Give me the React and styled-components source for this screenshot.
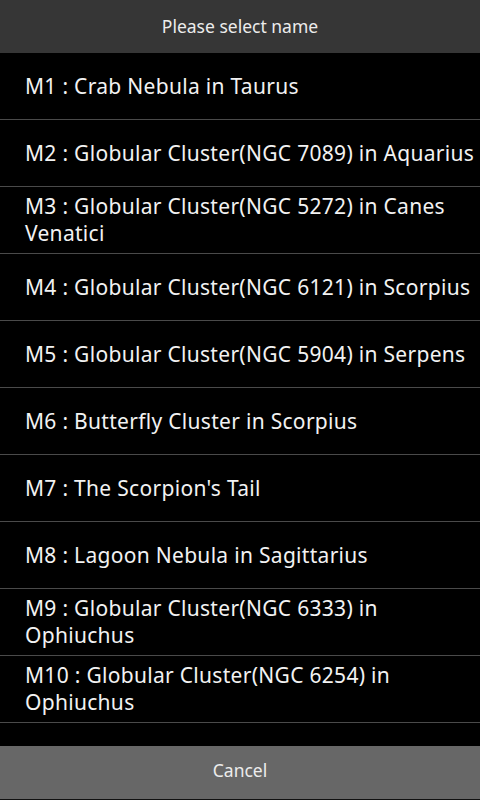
import React from "react";
import styled, { createGlobalStyle } from "styled-components";

const Global = createGlobalStyle`
  html, body { margin: 0; padding: 0; background: #000; }
  body { font-family: "Noto Sans", "Open Sans", "DejaVu Sans", sans-serif; }
  * { box-sizing: border-box; }
`;

const Screen = styled.div`
  width: 480px;
  height: 800px;
  display: flex;
  flex-direction: column;
  background: #000;
  overflow: hidden;
`;

const Header = styled.div`
  height: 53px;
  flex: none;
  background: #363636;
  color: #ececec;
  font-size: 17.5px;
  display: flex;
  align-items: center;
  justify-content: center;
  padding-bottom: 1px;
`;

const List = styled.div`
  flex: 1;
  overflow: hidden;
  display: flex;
  flex-direction: column;
`;

const Row = styled.div`
  flex: none;
  height: 67px;
  display: flex;
  align-items: center;
  padding: 0 0 0 25px;
  border-bottom: 1px solid #4a4a4a;
  color: #f2f2f2;
  font-size: 21px;
  line-height: 27px;
  letter-spacing: 0.3px;
`;

const Footer = styled.div`
  height: 54px;
  flex: none;
  border-bottom: 1px solid #111;
  background: #676767;
  color: #ececec;
  font-size: 17.5px;
  display: flex;
  align-items: center;
  justify-content: center;
  padding-bottom: 5px;
`;

const items = [
  "M1 : Crab Nebula in Taurus",
  "M2 : Globular Cluster(NGC 7089) in Aquarius",
  "M3 : Globular Cluster(NGC 5272) in Canes Venatici",
  "M4 : Globular Cluster(NGC 6121) in Scorpius",
  "M5 : Globular Cluster(NGC 5904) in Serpens",
  "M6 : Butterfly Cluster in Scorpius",
  "M7 : The Scorpion's Tail",
  "M8 : Lagoon Nebula in Sagittarius",
  "M9 : Globular Cluster(NGC 6333) in Ophiuchus",
  "M10 : Globular Cluster(NGC 6254) in Ophiuchus",
];

export default function App() {
  return (
    <>
      <Global />
      <Screen>
        <Header>Please select name</Header>
        <List>
          {items.map((t) => (
            <Row key={t}>{t}</Row>
          ))}
        </List>
        <Footer>Cancel</Footer>
      </Screen>
    </>
  );
}
